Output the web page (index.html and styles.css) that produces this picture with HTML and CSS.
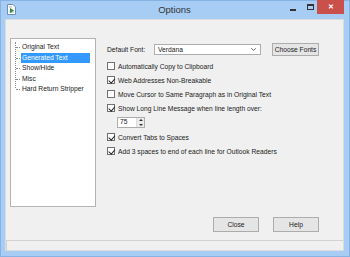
FILE: index.html
```html
<!DOCTYPE html>
<html lang="en">
<head>
    <meta charset="UTF-8">
    <title>Options</title>
    <link rel="stylesheet" href="styles.css">
</head>
<body>
<div class="window">
    <div class="titlebar">
        <svg class="app-icon" width="9" height="11" viewBox="0 0 9 11">
            <path d="M0.5 0.5 H6 L8.5 3 V10.5 H0.5 Z" fill="#fff" stroke="#6d8fb5"/>
            <path d="M2 3 H5 M2 8 H7" stroke="#9bb3cf"/>
            <path d="M3 4 L7 6.5 L3 9 Z" fill="#2e8b3a"/>
        </svg>
        <span class="title">Options</span>
        <span class="ctl min"></span>
        <span class="ctl max"></span>
        <span class="ctl close">&#x2715;</span>
    </div>
    <div class="client">
        <div class="main">
            <ul class="tree">
                <li>Original Text</li>
                <li class="selected">Generated Text</li>
                <li>Show/Hide</li>
                <li>Misc</li>
                <li>Hard Return Stripper</li>
            </ul>
            <div class="panel">
                <div class="font-row">
                    <span class="font-label">Default Font:</span>
                    <div class="combo">
                        <span>Verdana</span>
                        <svg width="5" height="3" viewBox="0 0 5 3"><path d="M0.3 0.3 L2.5 2.5 L4.7 0.3" fill="none" stroke="#555" stroke-width="0.9"/></svg>
                    </div>
                    <button class="btn choose">Choose Fonts</button>
                </div>
                <label class="check"><span class="box"></span>Automatically Copy to Clipboard</label>
                <label class="check"><span class="box on"></span>Web Addresses Non-Breakable</label>
                <label class="check"><span class="box"></span>Move Cursor to Same Paragraph as in Original Text</label>
                <label class="check"><span class="box on"></span>Show Long Line Message when line length over:</label>
                <div class="spin-row">
                    <div class="spin"><span>75</span><span class="arrows"><i class="up"></i><i class="down"></i></span></div>
                </div>
                <label class="check"><span class="box on"></span>Convert Tabs to Spaces</label>
                <label class="check"><span class="box on"></span>Add 3 spaces to end of each line for Outlook Readers</label>
            </div>
        </div>
        <div class="buttons">
            <button class="btn">Close</button>
            <button class="btn">Help</button>
        </div>
        <div class="status"></div>
    </div>
</div>
</body>
</html>
```

FILE: styles.css
```css
* { box-sizing: border-box; }
body { margin: 0; font-family: "Liberation Sans", Arial, sans-serif; font-size: 6.7px; color: #1a1a1a; }

.window { width: 350px; height: 257px; background: #a7cdf4; border: 1px solid #86b3e3; padding: 0 5px 5px 4px; display: flex; flex-direction: column; }
.titlebar { height: 18px; position: relative; display: flex; align-items: center; justify-content: center; }
.app-icon { position: absolute; left: 2px; top: 3px; }
.title { font-size: 9.5px; color: #353535; margin-top: -1px; }
.ctl { position: absolute; }
.min { left: 285px; top: 8px; width: 6px; height: 2px; background: #333; }
.max { left: 302px; top: 3px; width: 7px; height: 6px; border: 1px solid #333; border-top-width: 2px; }
.close { left: 312px; top: -1px; width: 27px; height: 14px; background: #c9504b; color: #fff; font-size: 7px; font-weight: bold; display: flex; align-items: center; justify-content: center; }

.client { flex: 1; background: #f0f0f0; border: 1px solid #dcdcdc; display: flex; flex-direction: column; padding-top: 18px; }
.main { display: flex; height: 169px; }

.tree { list-style: none; margin: 0 0 0 4px; padding: 3px 0 0 10px; width: 86px; background: #fff; border: 1px solid #b4b4b4; position: relative; }
.tree::before { content: ""; position: absolute; left: 4px; top: 3px; height: 46px; border-left: 1px dotted #8a8a8a; }
.tree li { height: 10.5px; line-height: 10.5px; position: relative; padding-left: 1px; }
.tree li::before { content: ""; position: absolute; left: -5px; top: 5px; width: 4px; border-top: 1px dotted #8a8a8a; }
.tree li.selected { background: #3399ff; color: #fff; width: 69px; }

.panel { padding: 4px 0 0 11px; flex: 1; }
.font-row { display: flex; align-items: center; height: 14px; margin-bottom: 3px; }
.font-label { width: 47px; }
.combo { width: 107px; height: 11px; background: #fff; border: 1px solid #adadad; display: flex; align-items: center; justify-content: space-between; padding: 0 4px 0 3px; }
.btn { font-family: inherit; font-size: 6.7px; color: #1a1a1a; background: #e5e5e5; border: 1px solid #acacac; padding: 0; }
.choose { width: 47px; height: 13px; margin-left: 11px; }

.check { display: flex; align-items: center; height: 14px; }
.box { width: 8px; height: 8px; background: #fff; border: 1px solid #707070; margin-right: 3px; position: relative; }
.box.on::after { content: ""; position: absolute; left: 1.5px; top: 0; width: 2.5px; height: 4.5px; border: solid #222; border-width: 0 1.5px 1.5px 0; transform: rotate(40deg); }

.spin-row { height: 15px; display: flex; align-items: center; padding-left: 10px; }
.spin { width: 28px; height: 11px; background: #fff; border: 1px solid #adadad; display: flex; justify-content: space-between; padding-left: 2px; }
.arrows { width: 8px; border-left: 1px solid #dcdcdc; background: #ececec; display: flex; flex-direction: column; align-items: center; justify-content: space-around; }
.arrows i { width: 0; height: 0; border-left: 2px solid transparent; border-right: 2px solid transparent; }
.arrows .up { border-bottom: 2px solid #333; }
.arrows .down { border-top: 2px solid #333; }

.buttons { display: flex; justify-content: flex-end; gap: 14px; padding-right: 24px; margin-top: 10px; }
.buttons .btn { width: 46px; height: 15px; }
.status { margin-top: 8px; flex: 1; border-top: 1px solid #d2d2d2; border-left: 1px solid #d2d2d2; }
```
